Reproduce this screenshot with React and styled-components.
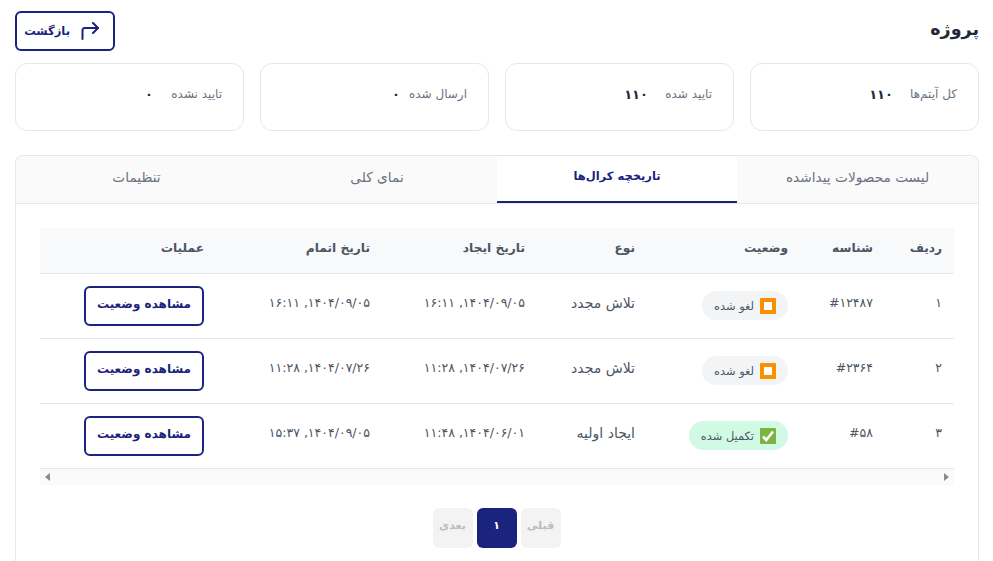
import React from "react";
import styled, { createGlobalStyle } from "styled-components";

const NAVY = "#1a237e";
const FONT = `"DejaVu Sans", "Noto Sans", sans-serif`;

const GlobalStyle = createGlobalStyle`
  html, body {
    margin: 0;
    padding: 0;
    background: #fff;
    overflow: hidden;
  }
  * {
    box-sizing: border-box;
  }
`;

const Page = styled.div`
  direction: rtl;
  width: 993px;
  height: 561px;
  overflow: hidden;
  padding: 11px 14px 0 15px;
  font-family: ${FONT};
  color: #374151;
`;

const Header = styled.header`
  display: flex;
  align-items: center;
  justify-content: space-between;
  height: 40px;
  margin-bottom: 12px;
`;

const Title = styled.h1`
  margin: 0 0 4px;
  font-size: 17.5px;
  line-height: 28px;
  font-weight: 700;
  color: #1f2937;
`;

const OutlineButton = styled.button`
  display: inline-flex;
  align-items: center;
  justify-content: center;
  width: 120px;
  height: 40px;
  padding: 0 0 3px;
  background: #fff;
  border: 2px solid ${NAVY};
  border-radius: 6px;
  color: ${NAVY};
  font-family: inherit;
  font-size: 12px;
  font-weight: 700;
`;

const BackButton = styled(OutlineButton)`
  justify-content: flex-start;
  gap: 11px;
  width: 100px;
  padding: 0 14px 0 0;
  font-size: 11.5px;
`;

const Cards = styled.section`
  display: grid;
  grid-template-columns: repeat(4, 229px);
  column-gap: 16px;
  margin-bottom: 24px;
`;

const Card = styled.div`
  display: flex;
  align-items: center;
  height: 68px;
  padding: 0 21px 6px;
  background: #fff;
  border: 1px solid #e5e7eb;
  border-radius: 12px;
`;

const CardLabel = styled.span`
  width: ${(p) => p.$w}px;
  font-size: 12px;
  color: #6b7280;
`;

const CardValue = styled.span`
  font-size: 13px;
  font-weight: 700;
  color: #1f2937;
`;

const Panel = styled.section`
  border: 1px solid #e5e7eb;
  border-bottom: 0;
  border-radius: 8px 8px 0 0;
  height: 420px;
  overflow: hidden;
`;

const Tabs = styled.nav`
  display: grid;
  grid-template-columns: 241px 240px 240px 241px;
  height: 48px;
  background: #fafafa;
  border-bottom: 1px solid #e5e7eb;
`;

const Tab = styled.div`
  display: flex;
  align-items: center;
  justify-content: center;
  height: 47px;
  padding-bottom: 5px;
  font-size: ${(p) => (p.$active ? "11.5px" : "13.7px")};
  font-weight: ${(p) => (p.$active ? 700 : 400)};
  color: ${(p) => (p.$active ? NAVY : "#6b7280")};
  background: ${(p) => (p.$active ? "#fff" : "transparent")};
  border-bottom: ${(p) => (p.$active ? `2px solid ${NAVY}` : "0")};
`;

const Body = styled.div`
  padding: 24px 24px 0;
`;

const Table = styled.table`
  width: 914px;
  table-layout: fixed;
  border-collapse: collapse;
`;

const Th = styled.th`
  height: 45px;
  padding: 0 12px 4px;
  background: #f8f9fb;
  border-bottom: 1px solid #e5e7eb;
  text-align: right;
  font-size: 12.2px;
  font-weight: 700;
  color: #4b5563;
`;

const Td = styled.td`
  height: 65px;
  padding: 0 12px ${(p) => (p.$centered ? "0" : "6px")};
  border-bottom: 1px solid #e5e7eb;
  text-align: right;
  font-size: ${(p) => (p.$large ? "14px" : "12.5px")};
  color: #4b5563;
  white-space: nowrap;
`;

const Badge = styled.span`
  display: inline-flex;
  align-items: center;
  gap: 6px;
  height: 29px;
  padding: 0 12px;
  border-radius: 15px;
  vertical-align: middle;
  background: ${(p) => (p.$done ? "#d1fae5" : "#f3f4f6")};
  font-size: 11.4px;
  color: #4b5563;
`;

const ScrollTrack = styled.div`
  display: flex;
  align-items: center;
  justify-content: space-between;
  width: 914px;
  height: 16px;
  padding: 0 5px;
  background: #fafafa;
`;

const Arrow = styled.span`
  width: 0;
  height: 0;
  border-top: 4px solid transparent;
  border-bottom: 4px solid transparent;
  border-left: ${(p) => (p.$dir === "right" ? "5px solid #8a8a8a" : "0")};
  border-right: ${(p) => (p.$dir === "left" ? "5px solid #8a8a8a" : "0")};
`;

const Pagination = styled.div`
  display: flex;
  justify-content: center;
  gap: 4px;
  margin-top: 23px;
  padding-right: 1px;
`;

const PageButton = styled.div`
  display: flex;
  align-items: center;
  justify-content: center;
  width: 40px;
  height: 40px;
  padding-bottom: 4px;
  border-radius: 6px;
  font-size: 11px;
  font-weight: 700;
  background: ${(p) => (p.$active ? NAVY : "#f3f3f3")};
  color: ${(p) => (p.$active ? "#fff" : "#b9bcc4")};
`;

const BackIcon = () => (
  <svg width="18" height="18" viewBox="0 0 18 18" fill="none" stroke={NAVY} strokeWidth="2" strokeLinecap="round" strokeLinejoin="round">
    <path d="M1.5 17V8a2 2 0 0 1 2-2H17" />
    <path d="M12 1l5 5-5 5" />
  </svg>
);

const StopEmoji = () => (
  <svg width="16" height="16" viewBox="0 0 16 16">
    <rect width="16" height="16" rx="1" fill="#f79100" />
    <rect x="4" y="4" width="8" height="8" fill="#fff" />
  </svg>
);

const CheckEmoji = () => (
  <svg width="16" height="16" viewBox="0 0 16 16">
    <rect width="16" height="16" rx="1" fill="#7cb342" />
    <path d="M3 8.5l3.3 3.5L13 3.5" fill="none" stroke="#fff" strokeWidth="2.6" />
  </svg>
);

const columns = [
  { title: "ردیف", width: 69 },
  { title: "شناسه", width: 85 },
  { title: "وضعیت", width: 153 },
  { title: "نوع", width: 110 },
  { title: "تاریخ ایجاد", width: 155 },
  { title: "تاریخ اتمام", width: 166 },
  { title: "عملیات", width: 176 },
];

const rows = [
  { n: "۱", id: "#۱۲۴۸۷", done: false, type: "تلاش مجدد", created: "۱۴۰۴/۰۹/۰۵, ۱۶:۱۱", finished: "۱۴۰۴/۰۹/۰۵, ۱۶:۱۱" },
  { n: "۲", id: "#۲۳۶۴", done: false, type: "تلاش مجدد", created: "۱۴۰۴/۰۷/۲۶, ۱۱:۲۸", finished: "۱۴۰۴/۰۷/۲۶, ۱۱:۲۸" },
  { n: "۳", id: "#۵۸", done: true, type: "ایجاد اولیه", created: "۱۴۰۴/۰۶/۰۱, ۱۱:۴۸", finished: "۱۴۰۴/۰۹/۰۵, ۱۵:۳۷" },
];

const stats = [
  { label: "کل آیتم‌ها", value: "۱۱۰", w: 64 },
  { label: "تایید شده", value: "۱۱۰", w: 64 },
  { label: "ارسال شده", value: "۰", w: 67 },
  { label: "تایید نشده", value: "۰", w: 69 },
];

const tabs = ["لیست محصولات پیداشده", "تاریخچه کرال‌ها", "نمای کلی", "تنظیمات"];

const App = () => {
  return (
    <Page>
      <GlobalStyle />
      <Header>
        <Title>پروژه</Title>
        <BackButton>
          <BackIcon />
          بازگشت
        </BackButton>
      </Header>
      <Cards>
        {stats.map((s) => (
          <Card key={s.label}>
            <CardLabel $w={s.w}>{s.label}</CardLabel>
            <CardValue>{s.value}</CardValue>
          </Card>
        ))}
      </Cards>
      <Panel>
        <Tabs>
          {tabs.map((t, i) => (
            <Tab key={t} $active={i === 1}>
              {t}
            </Tab>
          ))}
        </Tabs>
        <Body>
          <Table>
            <colgroup>
              {columns.map((c) => (
                <col key={c.title} style={{ width: c.width }} />
              ))}
            </colgroup>
            <thead>
              <tr>
                {columns.map((c) => (
                  <Th key={c.title}>{c.title}</Th>
                ))}
              </tr>
            </thead>
            <tbody>
              {rows.map((r) => (
                <tr key={r.n}>
                  <Td>{r.n}</Td>
                  <Td>{r.id}</Td>
                  <Td $centered>
                    <Badge $done={r.done}>
                      {r.done ? <CheckEmoji /> : <StopEmoji />}
                      {r.done ? "تکمیل شده" : "لغو شده"}
                    </Badge>
                  </Td>
                  <Td $large>{r.type}</Td>
                  <Td>{r.created}</Td>
                  <Td>{r.finished}</Td>
                  <Td $centered>
                    <OutlineButton>مشاهده وضعیت</OutlineButton>
                  </Td>
                </tr>
              ))}
            </tbody>
          </Table>
          <ScrollTrack>
            <Arrow $dir="right" />
            <Arrow $dir="left" />
          </ScrollTrack>
          <Pagination>
            <PageButton>قبلی</PageButton>
            <PageButton $active>۱</PageButton>
            <PageButton>بعدی</PageButton>
          </Pagination>
        </Body>
      </Panel>
    </Page>
  );
};

export default App;
